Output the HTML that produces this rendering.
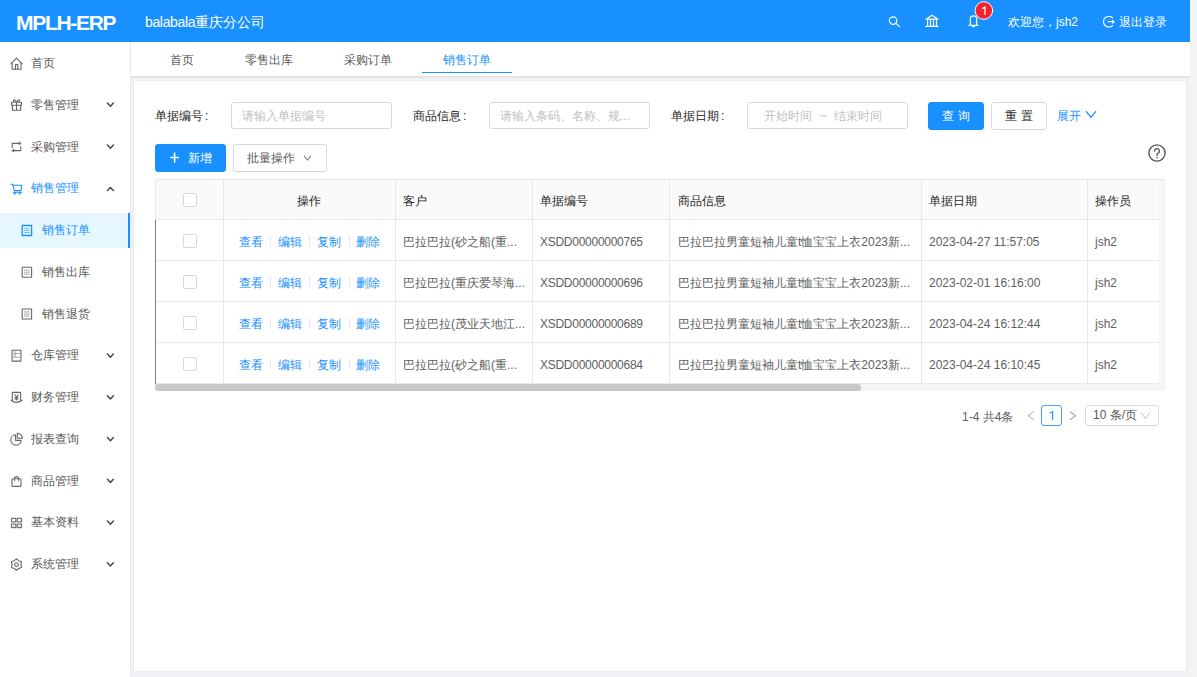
<!DOCTYPE html>
<html><head><meta charset="utf-8">
<style>
*{box-sizing:border-box;margin:0;padding:0}
html,body{width:1197px;height:677px;overflow:hidden}
body{position:relative;background:#f4f4f4;font-family:"Liberation Sans",sans-serif;font-size:12px;color:#595959}
.a{position:absolute;white-space:nowrap}
#hdr{left:0;top:0;width:1190px;height:42px;background:#1890ff;color:#fff}
#side{left:0;top:42px;width:130px;height:635px;background:#fff}
#main{left:130px;top:42px;width:1060px;height:635px;background:#f0f2f5}
#tabs{left:0;top:0;width:1060px;height:36px;background:#fff;border-left:1px solid #e8e8e8;border-bottom:2px solid #e4e4e4;border-bottom-left-radius:2px}
#card{left:4px;top:39px;width:1052px;height:590px;background:#fff;border-radius:2px;box-shadow:0 0 0 1px rgba(0,0,0,0.025)}
.mi{position:absolute;left:0;width:130px;height:35px;line-height:35px}
.mi .t{position:absolute;left:31px;top:0}
.mi .ic{position:absolute;left:10px;top:11px;width:12px;height:12px}
.mi .ch{position:absolute;left:107px;top:15px;width:7px;height:5px}
.sub .t{left:42px}
.sub .ic{left:21px}
.sel{background:#e6f7ff;color:#1890ff;border-right:2px solid #1890ff}
.inp{position:absolute;height:27px;border:1px solid #d9d9d9;border-radius:3px;background:#fff;color:#bfbfbf;line-height:27px;white-space:nowrap}
.lbl{position:absolute;color:#262626}
.btn{position:absolute;height:28px;border-radius:3px;line-height:26px;text-align:center}
.th{color:#262626}
.td{color:#606060}
.lk{color:#1890ff}
.dv{width:1px;height:10px;background:#e8e8e8}
.cb{position:absolute;width:14px;height:14px;border:1px solid #d9d9d9;border-radius:2px;background:#fff}
</style></head><body>
<div id="hdr" class="a">
  <div class="a" style="left:16px;top:10.5px;font-size:21px;font-weight:bold;letter-spacing:-1.3px">MPLH-ERP</div>
  <div class="a" style="left:145px;top:14px;font-size:14px"><span style="letter-spacing:-0.35px">balabala</span>重庆分公司</div>
  <div class="a" style="left:1008px;top:14px;font-size:12px">欢迎您，jsh2</div>
  <div class="a" style="left:1119px;top:14px;font-size:12px">退出登录</div>
</div>
<div id="side" class="a">
  <div class="mi" style="top:4px"><span class="t">首页</span></div>
  <div class="mi" style="top:45.75px"><span class="t">零售管理</span></div>
  <div class="mi" style="top:87.5px"><span class="t">采购管理</span></div>
  <div class="mi" style="top:129.25px;color:#1890ff"><span class="t">销售管理</span></div>
  <div class="mi sub sel" style="top:171px"><span class="t">销售订单</span></div>
  <div class="mi sub" style="top:212.75px"><span class="t">销售出库</span></div>
  <div class="mi sub" style="top:254.5px"><span class="t">销售退货</span></div>
  <div class="mi" style="top:296.25px"><span class="t">仓库管理</span></div>
  <div class="mi" style="top:338px"><span class="t">财务管理</span></div>
  <div class="mi" style="top:379.75px"><span class="t">报表查询</span></div>
  <div class="mi" style="top:421.5px"><span class="t">商品管理</span></div>
  <div class="mi" style="top:463.25px"><span class="t">基本资料</span></div>
  <div class="mi" style="top:505px"><span class="t">系统管理</span></div>
</div>
<div id="main" class="a">
  <div class="a" style="left:0;top:36px;width:1px;height:599px;background:#e8e9ec"></div>
  <div id="tabs" class="a">
    <div class="a" style="left:39px;top:9.5px">首页</div>
    <div class="a" style="left:114px;top:9.5px">零售出库</div>
    <div class="a" style="left:213px;top:9.5px">采购订单</div>
    <div class="a" style="left:312px;top:9.5px;color:#1890ff">销售订单</div>
    <div class="a" style="left:291px;top:30px;width:90px;height:1px;background:#1890ff"></div>
  </div>
  <div id="card" class="a"></div>
</div>

<!-- form -->
<div class="lbl a" style="left:155px;top:108px">单据编号<span style="margin-left:2px">:</span></div>
<div class="inp" style="left:231px;top:102px;width:161px;padding-left:10px">请输入单据编号</div>
<div class="lbl a" style="left:413px;top:108px">商品信息<span style="margin-left:2px">:</span></div>
<div class="inp" style="left:489px;top:102px;width:161px;padding-left:10px">请输入条码、名称、规...</div>
<div class="lbl a" style="left:671px;top:108px">单据日期<span style="margin-left:2px">:</span></div>
<div class="inp" style="left:747px;top:102px;width:161px"><span class="a" style="left:16px">开始时间</span><span class="a" style="left:72px">~</span><span class="a" style="left:86px">结束时间</span></div>
<div class="btn" style="left:928px;top:102px;width:56px;background:#1890ff;color:#fff;border:1px solid #1890ff">查 询</div>
<div class="btn" style="left:991px;top:102px;width:56px;background:#fff;color:#262626;border:1px solid #d9d9d9">重 置</div>
<div class="a" style="left:1057px;top:108px;color:#1890ff">展开</div>
<div class="btn" style="left:155px;top:144px;width:71px;background:#1890ff;color:#fff;border:1px solid #1890ff;text-align:left;padding-left:32px">新增</div>
<div class="btn" style="left:233px;top:144px;width:94px;background:#fff;color:#595959;border:1px solid #d9d9d9;text-align:left;padding-left:13px">批量操作</div>
<!-- table -->
<div class="a" style="left:155px;top:179px;width:1011px;height:41px;background:#fafafa;border:1px solid #e8e8e8;border-bottom:none;border-top-left-radius:3px;border-top-right-radius:3px"></div>
<div class="a" style="left:1159px;top:180px;width:7px;height:211px;background:#f5f5f5"></div>
<div class="a" style="left:155px;top:219px;width:1004px;height:1px;background:#e8e8e8"></div>
<div class="a" style="left:155px;top:260px;width:1004px;height:1px;background:#e8e8e8"></div>
<div class="a" style="left:155px;top:301px;width:1004px;height:1px;background:#e8e8e8"></div>
<div class="a" style="left:155px;top:342px;width:1004px;height:1px;background:#e8e8e8"></div>
<div class="a" style="left:155px;top:383px;width:1004px;height:1px;background:#e8e8e8"></div>
<div class="a" style="left:223px;top:180px;width:1px;height:204px;background:#e8e8e8"></div>
<div class="a" style="left:395px;top:180px;width:1px;height:204px;background:#e8e8e8"></div>
<div class="a" style="left:532px;top:180px;width:1px;height:204px;background:#e8e8e8"></div>
<div class="a" style="left:669px;top:180px;width:1px;height:204px;background:#e8e8e8"></div>
<div class="a" style="left:921px;top:180px;width:1px;height:204px;background:#e8e8e8"></div>
<div class="a" style="left:1087px;top:180px;width:1px;height:204px;background:#e8e8e8"></div>
<div class="a" style="left:155px;top:220px;width:1px;height:164px;background:#808080"></div>
<div class="a" style="left:155px;top:384px;width:1011px;height:7px;background:#f5f5f5"></div>
<div class="a" style="left:155px;top:384px;width:706px;height:7px;background:#c8c8c8;border-radius:3px"></div>
<div class="a th" style="left:297px;top:193px">操作</div>
<div class="a th" style="left:403px;top:193px">客户</div>
<div class="a th" style="left:540px;top:193px">单据编号</div>
<div class="a th" style="left:678px;top:193px">商品信息</div>
<div class="a th" style="left:929px;top:193px">单据日期</div>
<div class="a th" style="left:1095px;top:193px">操作员</div>
<div class="cb" style="left:182.5px;top:193px"></div>
<div class="cb" style="left:182.5px;top:234px"></div>
<div class="a lk" style="left:239px;top:234px">查看</div>
<div class="a dv" style="left:270px;top:236px"></div>
<div class="a lk" style="left:278px;top:234px">编辑</div>
<div class="a dv" style="left:309px;top:236px"></div>
<div class="a lk" style="left:317px;top:234px">复制</div>
<div class="a dv" style="left:349px;top:236px"></div>
<div class="a lk" style="left:356px;top:234px">删除</div>
<div class="a td" style="left:403px;top:234px">巴拉巴拉(砂之船(重...</div>
<div class="a td" style="letter-spacing:-0.27px;left:540px;top:235px">XSDD00000000765</div>
<div class="a td" style="left:678px;top:234px">巴拉巴拉男童短袖儿童t恤宝宝上衣2023新...</div>
<div class="a td" style="left:929px;top:235px">2023-04-27 11:57:05</div>
<div class="a td" style="left:1095px;top:235px">jsh2</div>
<div class="cb" style="left:182.5px;top:275px"></div>
<div class="a lk" style="left:239px;top:275px">查看</div>
<div class="a dv" style="left:270px;top:277px"></div>
<div class="a lk" style="left:278px;top:275px">编辑</div>
<div class="a dv" style="left:309px;top:277px"></div>
<div class="a lk" style="left:317px;top:275px">复制</div>
<div class="a dv" style="left:349px;top:277px"></div>
<div class="a lk" style="left:356px;top:275px">删除</div>
<div class="a td" style="left:403px;top:275px">巴拉巴拉(重庆爱琴海...</div>
<div class="a td" style="letter-spacing:-0.27px;left:540px;top:276px">XSDD00000000696</div>
<div class="a td" style="left:678px;top:275px">巴拉巴拉男童短袖儿童t恤宝宝上衣2023新...</div>
<div class="a td" style="left:929px;top:276px">2023-02-01 16:16:00</div>
<div class="a td" style="left:1095px;top:276px">jsh2</div>
<div class="cb" style="left:182.5px;top:316px"></div>
<div class="a lk" style="left:239px;top:316px">查看</div>
<div class="a dv" style="left:270px;top:318px"></div>
<div class="a lk" style="left:278px;top:316px">编辑</div>
<div class="a dv" style="left:309px;top:318px"></div>
<div class="a lk" style="left:317px;top:316px">复制</div>
<div class="a dv" style="left:349px;top:318px"></div>
<div class="a lk" style="left:356px;top:316px">删除</div>
<div class="a td" style="left:403px;top:316px">巴拉巴拉(茂业天地江...</div>
<div class="a td" style="letter-spacing:-0.27px;left:540px;top:317px">XSDD00000000689</div>
<div class="a td" style="left:678px;top:316px">巴拉巴拉男童短袖儿童t恤宝宝上衣2023新...</div>
<div class="a td" style="left:929px;top:317px">2023-04-24 16:12:44</div>
<div class="a td" style="left:1095px;top:317px">jsh2</div>
<div class="cb" style="left:182.5px;top:357px"></div>
<div class="a lk" style="left:239px;top:357px">查看</div>
<div class="a dv" style="left:270px;top:359px"></div>
<div class="a lk" style="left:278px;top:357px">编辑</div>
<div class="a dv" style="left:309px;top:359px"></div>
<div class="a lk" style="left:317px;top:357px">复制</div>
<div class="a dv" style="left:349px;top:359px"></div>
<div class="a lk" style="left:356px;top:357px">删除</div>
<div class="a td" style="left:403px;top:357px">巴拉巴拉(砂之船(重...</div>
<div class="a td" style="letter-spacing:-0.27px;left:540px;top:358px">XSDD00000000684</div>
<div class="a td" style="left:678px;top:357px">巴拉巴拉男童短袖儿童t恤宝宝上衣2023新...</div>
<div class="a td" style="left:929px;top:358px">2023-04-24 16:10:45</div>
<div class="a td" style="left:1095px;top:358px">jsh2</div>
<div class="a td" style="left:962px;top:409px">1-4 共4条</div>
<div class="a" style="left:1041px;top:405px;width:21px;height:21px;border:1px solid #40a0ff;border-radius:3px"></div>
<div class="a" style="left:1085px;top:405px;width:74px;height:21px;border:1px solid #d9d9d9;border-radius:3px;line-height:19px;padding-left:7px">10 条/页</div>
<!-- icons -->

<svg class="a" style="left:0;top:0;z-index:10" width="1197" height="677" viewBox="0 0 1197 677" fill="none" stroke-linecap="round" stroke-linejoin="round">
<g stroke="#fff" stroke-width="1.2">
  <circle cx="893.1" cy="20.6" r="3.7"/>
  <path d="M895.9 23.4 L899.6 26.6"/>
  <path d="M926 19.2 L932 15.3 L938 19.2 Z" />
  <path d="M925.8 26.4 H938.1"/>
  <path d="M927.6 19.6 V26 M930.5 19.6 V26 M933.5 19.6 V26 M936.5 19.6 V26"/>
  <path d="M969 25.4 H978 M970.3 25.4 V19 A3.2 3.2 0 0 1 976.7 19 V25.4 M972.6 26.6 H974.4"/>
  <path d="M1112.6 17.8 A5.4 5.4 0 1 0 1112.6 25.6"/>
  <path d="M1108.2 21.7 H1114.2 M1112.6 20.4 L1114.2 21.7 L1112.6 23"/>
</g>
<circle cx="983.9" cy="10.5" r="8.8" fill="#f5222d" stroke="#fff" stroke-width="1"/>
<path d="M982.3 8.6 L985 7.1 V14.8" stroke="#fff" stroke-width="1.3" stroke-linecap="butt" stroke-linejoin="miter"/>

<g stroke="#666" stroke-width="1.1">
  <path d="M10.9 63.8 L16.5 58.2 L22.2 63.8"/>
  <path d="M12.1 62.8 V69.2 H21 V62.8"/>
  <path d="M15.4 69.2 V64.6 H17.8 V69.2"/>
  <path d="M11.6 102.3 H21.5 V105.2 H11.6 Z M12.4 105.2 V110.3 H20.7 V105.2 M16.55 102.3 V110.3"/>
  <path d="M16.5 102.2 C15 99 13 99.5 13.6 101.5 M16.5 102.2 C18 99 20 99.5 19.4 101.5"/>
  <path d="M12.2 147.4 V143.4 H19.5"/><path d="M19.3 142.1 L21.2 143.4 L19.3 144.7 Z" fill="#666" stroke-width="0.6"/>
  <path d="M20.8 146.5 V150.6 H13.5"/><path d="M13.7 149.3 L11.8 150.6 L13.7 151.9 Z" fill="#666" stroke-width="0.6"/>
  <rect x="12.1" y="350.3" width="8.8" height="10.8"/>
  <path d="M12.1 353.5 H20.9 M12.1 357.2 H20.9 M15.2 350.3 V357.2" stroke="#aaa"/>
  <path d="M12.3 400.6 V392.4 H20.7 V400.6 M11 400.3 Q16.5 404.5 22 400.3"/>
  <path d="M14.8 394.8 L16.5 397.2 L18.2 394.8 M16.5 397.2 V400 M15 397.8 H18 M15 399 H18"/>
  <path d="M21.2 440.4 A5.2 5.2 0 1 1 15.6 434.8 V440.4 Z"/>
  <path d="M17.3 433.3 A5 5 0 0 1 22.4 438.3 H17.3 Z"/>
  <rect x="12" y="478.8" width="9" height="7.6" rx="1"/>
  <path d="M14.6 480.6 V478.6 A1.95 1.95 0 0 1 18.5 478.6 V480.6"/>
  <g stroke-width="1.3" stroke="#777">
  <rect x="11.5" y="518.4" width="4.3" height="3.4"/>
  <rect x="17.2" y="518.4" width="4.3" height="3.4"/>
  <rect x="11.5" y="524.1" width="4.3" height="3.4"/>
  <rect x="17.2" y="524.1" width="4.3" height="3.4"/>
  </g>
  <path d="M16.50 558.80 L18.75 560.70 L21.52 561.70 L21.00 564.60 L21.52 567.50 L18.75 568.50 L16.50 570.40 L14.25 568.50 L11.48 567.50 L12.00 564.60 L11.48 561.70 L14.25 560.70 Z"/>
  <circle cx="16.5" cy="564.6" r="1.9"/>
  <g stroke="#444" stroke-width="1.4">
  <path d="M107.4 103 L110.4 106.2 L113.4 103"/>
  <path d="M107.4 145 L110.4 148.2 L113.4 145"/>
  <path d="M107.4 190.6 L110.4 187.4 L113.4 190.6"/>
  <path d="M107.4 354 L110.4 357.2 L113.4 354"/>
  <path d="M107.4 395.7 L110.4 398.9 L113.4 395.7"/>
  <path d="M107.4 437.5 L110.4 440.7 L113.4 437.5"/>
  <path d="M107.4 479.2 L110.4 482.4 L113.4 479.2"/>
  <path d="M107.4 521 L110.4 524.2 L113.4 521"/>
  <path d="M107.4 562.7 L110.4 565.9 L113.4 562.7"/>
  </g>
</g>
<g stroke="#1890ff" stroke-width="1.1">
  <path d="M11 184.3 H12.8 L14.3 190.6 H20.8 L21.8 185.2 H13"/>
  <path d="M13 192.3 H21.7"/>
  <circle cx="14.8" cy="193.4" r="0.5" fill="#1890ff"/>
  <circle cx="19.6" cy="193.4" r="0.5" fill="#1890ff"/>
  <rect x="22.2" y="225.5" width="9.4" height="10" stroke-width="1.3"/>
  <path d="M24.4 228.4 H29.4 M24.4 230.5 H29.4 M24.4 232.5 H29.4" stroke-width="0.7" opacity="0.8"/>
</g>
<g stroke="#666" stroke-width="1.1">
  <rect x="22.2" y="267.2" width="9.4" height="10"/>
  <path d="M24.4 270.1 H29.4 M24.4 272.2 H29.4 M24.4 274.2 H29.4" stroke-width="0.7" opacity="0.8"/>
  <rect x="22.2" y="309" width="9.4" height="10"/>
  <path d="M24.4 311.9 H29.4 M24.4 314 H29.4 M24.4 316 H29.4" stroke-width="0.7" opacity="0.8"/>
</g>
<path d="M1086.3 111.6 L1091 117.4 L1095.7 111.6" stroke="#1890ff" stroke-width="1.3"/>
<path d="M174.6 152.5 V162.5 M170.2 157.5 H179" stroke="#fff" stroke-width="1.6" stroke-linecap="butt"/>
<path d="M304.3 156.2 L307.5 160.2 L310.7 156.2" stroke="#888" stroke-width="1.1"/>
<circle cx="1157" cy="153" r="8.1" stroke="#555" stroke-width="1.4"/>
<path d="M1154.6 151 A2.4 2.4 0 1 1 1157.8 153.3 Q1157 153.8 1157 155 V155.6" stroke="#555" stroke-width="1.3"/>
<circle cx="1157" cy="157.7" r="0.8" fill="#555"/>
<path d="M1033.6 411.8 L1028.2 415.7 L1033.6 419.6" stroke="#c0c0c0" stroke-width="1.1"/>
<path d="M1070.2 411.8 L1075.6 415.7 L1070.2 419.6" stroke="#a6a6a6" stroke-width="1.1"/>
<path d="M1049.6 413.3 L1052.6 411.6 V420" stroke="#1890ff" stroke-width="1.1" stroke-linecap="butt" stroke-linejoin="miter"/>
<path d="M1141.5 413 L1145.5 418.7 L1149.5 413" stroke="#c0c0c0" stroke-width="1"/>
</svg>
</body></html>
